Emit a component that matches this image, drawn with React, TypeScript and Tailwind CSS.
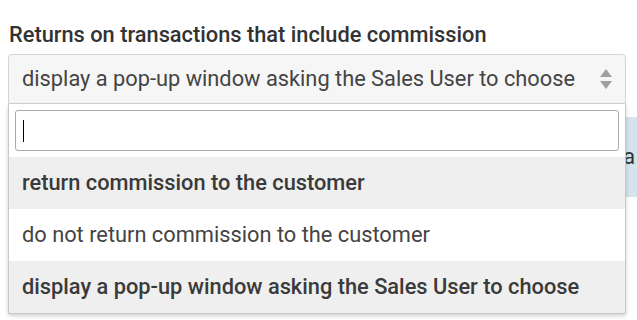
import { useState } from "react"

const options = [
  "return commission to the customer",
  "do not return commission to the customer",
  "display a pop-up window asking the Sales User to choose",
]

export default function App() {
  const [hovered] = useState(0)
  const selected = 2

  return (
    <div className="relative h-[320px] w-[637px] overflow-hidden bg-white font-['Roboto',sans-serif] text-[#333]">
      {/* panel peeking out behind the dropdown */}
      <div className="absolute left-[560px] top-[117px] flex h-[80px] w-[120px] items-center justify-end bg-[#d5e3ec] text-[21.8px] text-[#333]">
        <span className="mr-[45px]">a</span>
      </div>

      <div className="relative px-[8px] pt-[22px]">
        <label className="block pl-[1px] text-[21.8px] font-medium leading-[26px] text-[#333]">
          Returns on transactions that include commission
        </label>

        <div className="mt-[6px] w-[618px]">
          <div className="flex h-[50px] items-center justify-between rounded-t-[4px] border border-[#d3d3d3] bg-[#f6f6f6] pl-[13px] pr-[12px]">
            <span className="text-[21.8px] text-[#444]">{options[selected]}</span>
            <svg width="14" height="24" viewBox="0 0 14 24" className="text-[#a0a0a0]">
              <path d="M7 2 L13 10 L1 10 Z" fill="currentColor" />
              <path d="M1 14 L13 14 L7 22 Z" fill="currentColor" />
            </svg>
          </div>

          <div className="border-x border-b border-[#c8c8c8] bg-white shadow-[0_2px_4px_rgba(0,0,0,0.18)]">
            <div className="px-[6px] pb-[6px] pt-[6px]">
              <div className="flex h-[41px] items-center rounded-[3px] border border-[#aaa] bg-white px-[7px]">
                <span className="h-[22px] w-[1px] bg-black" />
              </div>
            </div>
            {options.map((o, i) => (
              <div
                key={o}
                className={
                  i === hovered || i === selected
                    ? "flex h-[52px] items-center bg-[#efefef] px-[13px] text-[21.8px] font-medium text-[#3a3a3a]"
                    : "flex h-[52px] items-center bg-white px-[13px] text-[21.8px] text-[#444]"
                }
              >
                {o}
              </div>
            ))}
          </div>
        </div>
      </div>
    </div>
  )
}
